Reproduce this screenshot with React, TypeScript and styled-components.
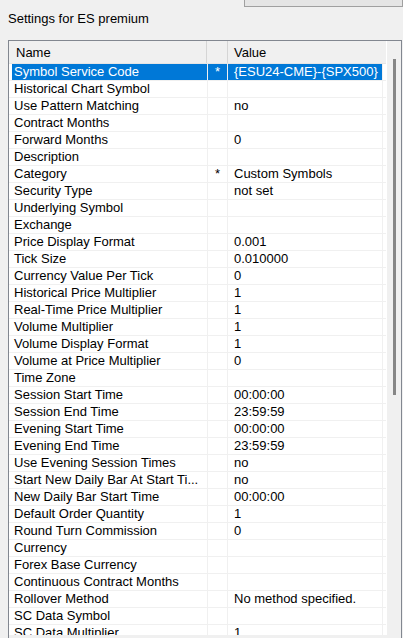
import React from "react"
import styled, { createGlobalStyle } from "styled-components"

type Setting = {
  name: string
  flag?: boolean
  value?: string
}

const settings: Setting[] = [
  { name: "Symbol Service Code", flag: true, value: "{ESU24-CME}-{SPX500}" },
  { name: "Historical Chart Symbol" },
  { name: "Use Pattern Matching", value: "no" },
  { name: "Contract Months" },
  { name: "Forward Months", value: "0" },
  { name: "Description" },
  { name: "Category", flag: true, value: "Custom Symbols" },
  { name: "Security Type", value: "not set" },
  { name: "Underlying Symbol" },
  { name: "Exchange" },
  { name: "Price Display Format", value: "0.001" },
  { name: "Tick Size", value: "0.010000" },
  { name: "Currency Value Per Tick", value: "0" },
  { name: "Historical Price Multiplier", value: "1" },
  { name: "Real-Time Price Multiplier", value: "1" },
  { name: "Volume Multiplier", value: "1" },
  { name: "Volume Display Format", value: "1" },
  { name: "Volume at Price Multiplier", value: "0" },
  { name: "Time Zone" },
  { name: "Session Start Time", value: "00:00:00" },
  { name: "Session End Time", value: "23:59:59" },
  { name: "Evening Start Time", value: "00:00:00" },
  { name: "Evening End Time", value: "23:59:59" },
  { name: "Use Evening Session Times", value: "no" },
  { name: "Start New Daily Bar At Start Ti...", value: "no" },
  { name: "New Daily Bar Start Time", value: "00:00:00" },
  { name: "Default Order Quantity", value: "1" },
  { name: "Round Turn Commission", value: "0" },
  { name: "Currency" },
  { name: "Forex Base Currency" },
  { name: "Continuous Contract Months" },
  { name: "Rollover Method", value: "No method specified." },
  { name: "SC Data Symbol" },
  { name: "SC Data Multiplier", value: "1" },
]

export default function App() {
  const selected = 0

  return (
    <>
      <GlobalStyle />
      <Page>
        <TopBar>
          <DialogButton type="button" />
        </TopBar>
        <Title>Settings for ES premium</Title>
        <ListBox>
          <ListMain>
            <Grid>
              <HeaderRow>
                <HeadCell width={198} pad={7}>
                  Name
                </HeadCell>
                <HeadCell width={21} pad={0} />
                <HeadCell pad={6} last>
                  Value
                </HeadCell>
              </HeaderRow>
              <Body>
                {settings.map((s, i) => (
                  <Row key={s.name}>
                    <NameCell selected={i === selected}>{s.name}</NameCell>
                    <FlagCell selected={i === selected}>{s.flag ? "*" : ""}</FlagCell>
                    <ValueCell selected={i === selected}>{s.value ?? ""}</ValueCell>
                  </Row>
                ))}
              </Body>
            </Grid>
            <ScrollTrack>
              <ScrollThumb />
            </ScrollTrack>
          </ListMain>
          <HScrollBar />
        </ListBox>
      </Page>
    </>
  )
}

const GlobalStyle = createGlobalStyle`
  html, body {
    margin: 0;
    padding: 0;
    background: #f0f0f0;
    overflow: hidden;
  }

  body {
    font-family: "Liberation Sans", Arial, sans-serif;
    font-size: 13px;
    color: #000;
  }
`

const Page = styled.div`
  display: flex;
  flex-direction: column;
  width: 403px;
  height: 638px;
  overflow: hidden;
`

const TopBar = styled.div`
  display: flex;
  justify-content: flex-end;
  height: 7px;
`

const DialogButton = styled.button`
  box-sizing: border-box;
  width: 159px;
  height: 23px;
  margin-top: -16px;
  padding: 0;
  border: 1px solid #a0a0a0;
  background: #e5e5e5;
`

const Title = styled.div`
  margin-top: 4px;
  padding-left: 8px;
  height: 16px;
  line-height: 16px;
`

const ListBox = styled.div`
  box-sizing: border-box;
  display: flex;
  flex-direction: column;
  width: 394px;
  margin: 13px 0 0 8px;
  border: 1px solid #828790;
  background: #f0f0f0;
`

const ListMain = styled.div`
  display: flex;
`

const Grid = styled.div`
  display: flex;
  flex-direction: column;
  width: 377px;
  background: #fff;
`

const HeaderRow = styled.div`
  display: flex;
  height: 23px;
  box-sizing: border-box;
  border-bottom: 1px solid #e5e5e5;
  background: #f0f0f0;
`

const HeadCell = styled.div<{ width?: number; pad: number; last?: boolean }>`
  box-sizing: border-box;
  ${(p) => (p.width ? `width: ${p.width}px;` : "flex: 1;")}
  padding: 4px 0 0 ${(p) => p.pad}px;
  line-height: 16px;
  border-right: ${(p) => (p.last ? "none" : "1px solid #d5d5d5")};
  white-space: nowrap;
`

const Body = styled.div`
  height: 571px;
  overflow: hidden;
`

const Row = styled.div`
  display: flex;
  box-sizing: border-box;
  height: 17px;
  padding-left: 3px;
  border-bottom: 1px solid #f0f0f0;
`

const Cell = styled.div<{ selected?: boolean }>`
  box-sizing: border-box;
  height: 16px;
  line-height: 16px;
  white-space: nowrap;
  overflow: hidden;
  border-right: 1px solid #f0f0f0;
  background: ${(p) => (p.selected ? "#0078d7" : "transparent")};
  color: ${(p) => (p.selected ? "#fff" : "#000")};
`

const NameCell = styled(Cell)`
  width: 196px;
  padding-left: 2px;
`

const FlagCell = styled(Cell)`
  width: 20px;
  text-align: center;
`

const ValueCell = styled(Cell)`
  width: 155px;
  padding-left: 6px;
`

const ScrollTrack = styled.div`
  flex: 1;
  display: flex;
  flex-direction: column;
  padding-left: 6px;
  border-left: 1px solid #fff;
  background: #f0f0f0;
`

const ScrollThumb = styled.div`
  width: 3px;
  height: 336px;
  margin-top: 18px;
  background: #868686;
`

const HScrollBar = styled.div`
  height: 17px;
  background: #f0f0f0;
`
